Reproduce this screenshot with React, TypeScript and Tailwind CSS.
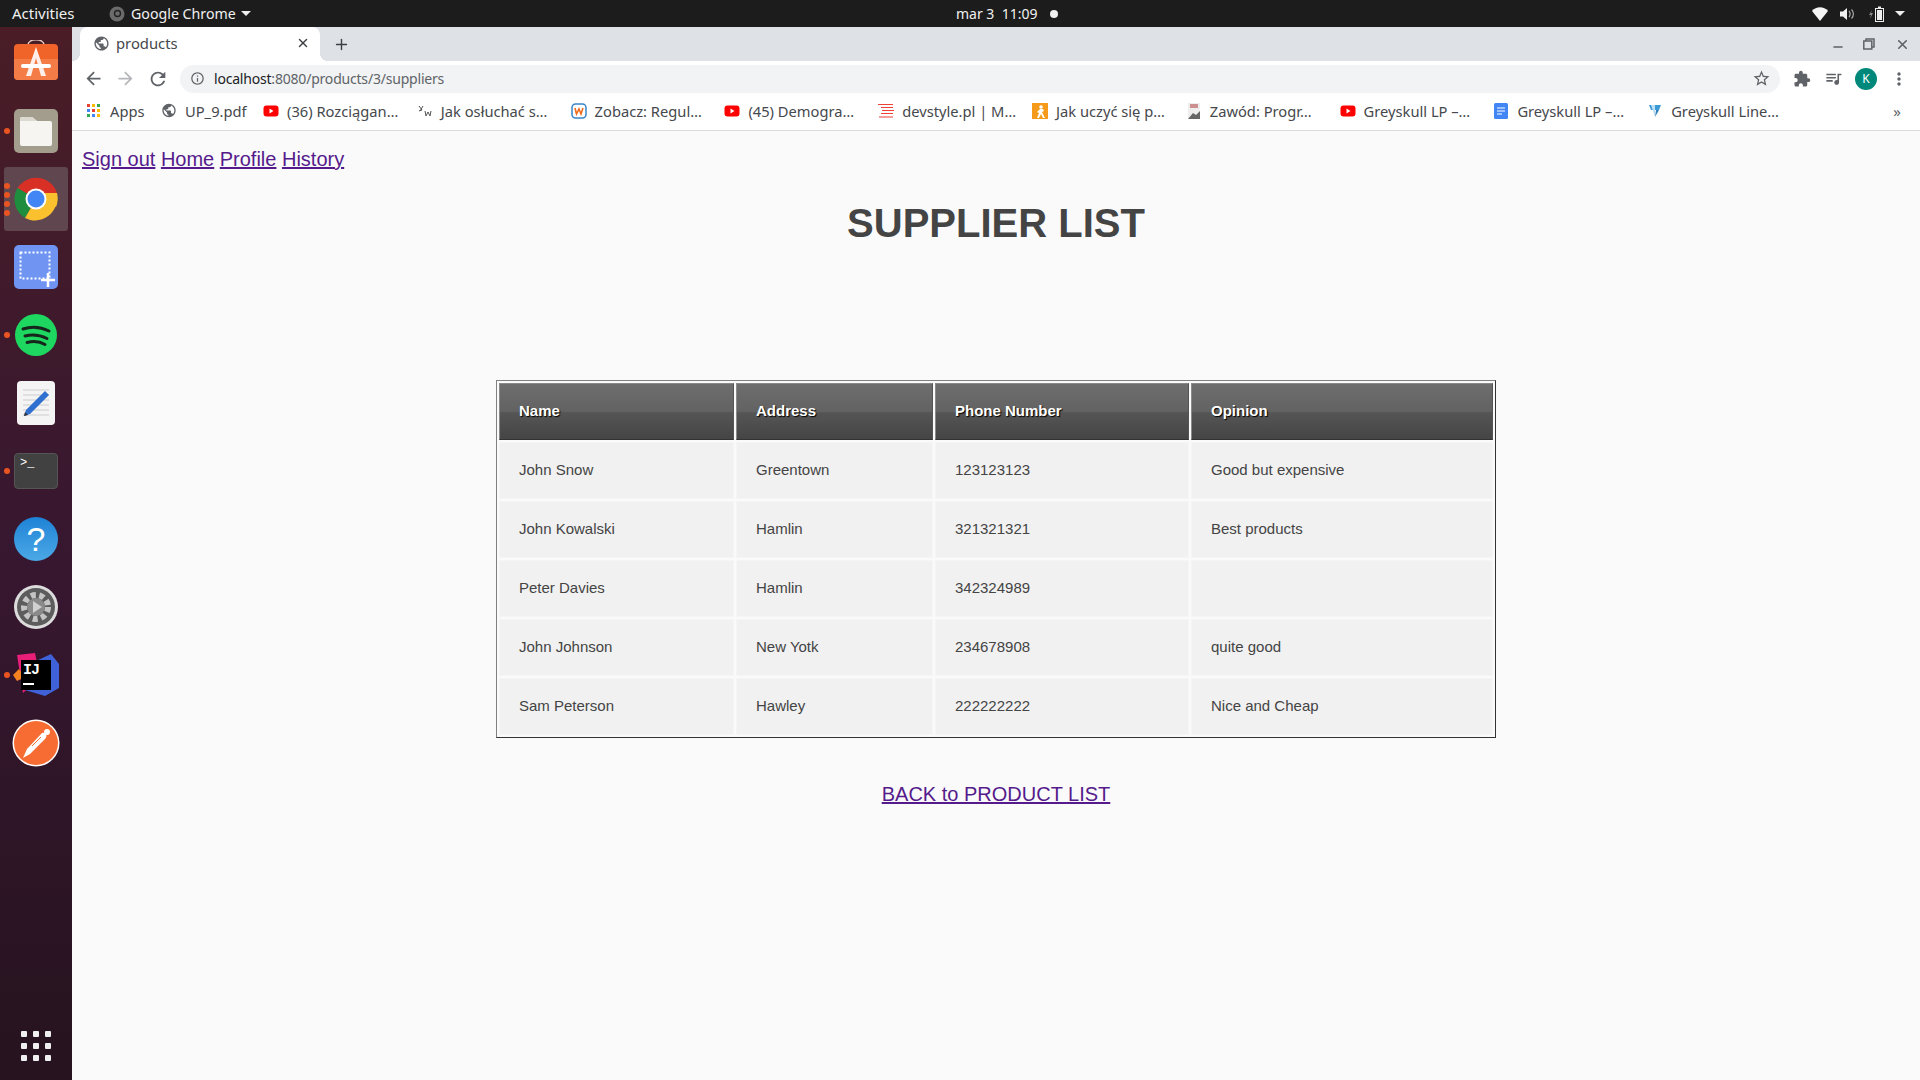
import { MdArrowBack, MdArrowForward, MdExtension, MdInfoOutline, MdMoreVert, MdPublic, MdQueueMusic, MdRefresh, MdStarBorder } from "react-icons/md";
import { Minus, Plus, X } from "lucide-react";

const suppliers = [
  { name: "John Snow", address: "Greentown", phone: "123123123", opinion: "Good but expensive" },
  { name: "John Kowalski", address: "Hamlin", phone: "321321321", opinion: "Best products" },
  { name: "Peter Davies", address: "Hamlin", phone: "342324989", opinion: "" },
  { name: "John Johnson", address: "New Yotk", phone: "234678908", opinion: "quite good" },
  { name: "Sam Peterson", address: "Hawley", phone: "222222222", opinion: "Nice and Cheap" },
];

function YouTubeIcon() {
  return (
    <svg width="16" height="16" viewBox="0 0 16 16">
      <rect x="0.5" y="2.5" width="15" height="11" rx="3" fill="#f00" />
      <path d="M6.5 5.5v5l4-2.5z" fill="#fff" />
    </svg>
  );
}

function AppsIcon() {
  const colors = ["#ea4335", "#fbbc05", "#34a853", "#4285f4", "#ea4335", "#fbbc05", "#34a853", "#4285f4", "#fbbc05"];
  return (
    <div className="grid grid-cols-3 gap-[2px] w-[13px]">
      {colors.map((c, i) => (
        <svg key={i} width="3" height="3" className="block"><rect width="3" height="3" fill={c} /></svg>
      ))}
    </div>
  );
}

const bookmarks: { label: string; icon: React.ReactNode }[] = [
  { label: "UP_9.pdf", icon: <MdPublic size={17} className="text-[#5f6368]" /> },
  { label: "(36) Rozciągan…", icon: <YouTubeIcon /> },
  {
    label: "Jak osłuchać s…",
    icon: (
      <svg width="16" height="16" viewBox="0 0 16 16" stroke="#555" strokeWidth="1" fill="none">
        <path d="M2 3l3 4-3 1M6 3L3 8M8 8l1 5 2-4 2 4 1-5" />
      </svg>
    ),
  },
  {
    label: "Zobacz: Regul…",
    icon: (
      <svg width="16" height="16" viewBox="0 0 16 16">
        <rect x="1" y="1" width="14" height="14" rx="3.5" fill="#fff" stroke="#3a86c8" strokeWidth="1.5" />
        <path d="M4 5l1.5 6L8 6l2 5 2-6" fill="none" stroke="#f26b1d" strokeWidth="1.6" />
      </svg>
    ),
  },
  { label: "(45) Demogra…", icon: <YouTubeIcon /> },
  {
    label: "devstyle.pl | M…",
    icon: (
      <svg width="16" height="16" viewBox="0 0 16 16" stroke="#ef4136" strokeWidth="1.2">
        <path d="M0 1.5h15M3 4.5h12M4 7.5h12M3 10.5h12M1 14h14" />
      </svg>
    ),
  },
  {
    label: "Jak uczyć się p…",
    icon: (
      <svg width="16" height="16" viewBox="0 0 16 16">
        <rect width="16" height="16" fill="#f59a1b" />
        <circle cx="9" cy="4" r="1.8" fill="#fff" />
        <path d="M8 6l-3 3 2 1-2 5h2l2-4 2 4h2l-3-6 2-1-1-2z" fill="#fff" />
      </svg>
    ),
  },
  {
    label: "Zawód: Progr…",
    icon: (
      <svg width="16" height="16" viewBox="0 0 16 16">
        <rect x="2" y="0" width="12" height="16" fill="#eee" />
        <path d="M4 2h8M4 4h8" stroke="#a33" strokeWidth="1" />
        <path d="M2 16l5-6 3 2 4-4v8z" fill="#666" />
      </svg>
    ),
  },
  { label: "Greyskull LP –…", icon: <YouTubeIcon /> },
  {
    label: "Greyskull LP –…",
    icon: (
      <svg width="16" height="16" viewBox="0 0 16 16">
        <rect x="1" width="14" height="16" rx="1.5" fill="#4285f4" />
        <path d="M4 5h8M4 8h8M4 11h5" stroke="#fff" strokeWidth="1.2" />
      </svg>
    ),
  },
  {
    label: "Greyskull Line…",
    icon: (
      <svg width="16" height="16" viewBox="0 0 16 16">
        <path d="M2 2h12l-2 5H4z" fill="#3c9ad6" />
        <path d="M4 2h4v12z" fill="#bfe0f4" />
        <path d="M8 14l4-7h-3z" fill="#2f7fb8" />
      </svg>
    ),
  },
];

function TopBar() {
  return (
    <div className="h-[27px] bg-[#1c1c1c] text-[#f0f0f0] text-[15px] flex items-center relative shrink-0">
      <span className="ml-3 w-[97px]">Activities</span>
      <svg width="16" height="16" viewBox="0 0 16 16">
        <circle cx="8" cy="8" r="7.5" fill="#6b6b6b" />
        <circle cx="8.5" cy="7.5" r="3" fill="none" stroke="#222" strokeWidth="1.4" />
      </svg>
      <span className="ml-[6px] text-[14.2px]">Google Chrome</span>
      <svg width="10" height="5" viewBox="0 0 10 5" className="ml-[5px]"><path d="M0 0h10L5 5z" fill="#eee" /></svg>
      <div className="absolute left-[956px] top-0 h-full flex items-center gap-[13px] text-[14px]">
        <span>mar 3&nbsp; 11:09</span>
        <span className="w-[8px] h-[8px] rounded-full bg-[#f0f0f0]" />
      </div>
      <div className="ml-auto flex items-center">
        <svg width="16" height="14" viewBox="0 0 16 14" className="mr-[12px]">
          <path d="M0 4C4-1 12-1 16 4L8 14z" fill="#f5f5f5" />
        </svg>
        <svg width="15" height="14" viewBox="0 0 15 14" className="mr-[14px]">
          <path d="M0 4.5h3L7 1v12L3 9.5H0z" fill="#f0f0f0" />
          <path d="M9 4c1.5 1.5 1.5 4.5 0 6M11.5 2.5c2.5 2.5 2.5 6.5 0 9" fill="none" stroke="#aaa" strokeWidth="1.2" />
        </svg>
        <svg width="16" height="16" viewBox="0 0 16 16" className="mr-[10px]">
          <path d="M3 4L0 9h2l-1 4 3-6H2z" fill="#888" />
          <rect x="6.5" y="2.5" width="8" height="13" fill="none" stroke="#eee" />
          <rect x="9" y="0.5" width="3" height="2" fill="#eee" />
          <rect x="8" y="4" width="5" height="10" fill="#eee" />
        </svg>
        <svg width="10" height="5" viewBox="0 0 10 5" className="mr-[15px]"><path d="M0 0h10L5 5z" fill="#eee" /></svg>
      </div>
    </div>
  );
}

function DockSlot({ children, dots = 0, active = false }: { children: React.ReactNode; dots?: number; active?: boolean }) {
  return (
    <div className="h-[68px] flex items-center justify-center relative">
      {active && <div className="absolute left-1 right-1 top-[2px] bottom-[2px] rounded-[3px] bg-[#5f464f]" />}
      <div className="absolute left-[4px] top-0 bottom-0 flex flex-col justify-center gap-[3px]">
        {Array.from({ length: dots }).map((_, i) => (
          <span key={i} className="block w-[6px] h-[6px] rounded-full bg-[#e95420]" />
        ))}
      </div>
      <div className="relative w-[48px] h-[48px] flex items-center justify-center">{children}</div>
    </div>
  );
}

function Dock() {
  return (
    <div className="w-[72px] shrink-0 pt-[2px] flex flex-col bg-gradient-to-b from-[#4a1d26] via-[#371730] to-[#26131f]">
      <DockSlot>
        <svg width="46" height="46" viewBox="0 0 46 46">
          <path d="M15 5c0-7 16-7 16 0" fill="none" stroke="#e8d5c5" strokeWidth="1.5" />
          <rect x="1" y="4" width="44" height="36" rx="4" fill="#f0642a" />
          <path d="M1 19h44v17a4 4 0 0 1-4 4H5a4 4 0 0 1-4-4z" fill="#f47d47" />
          <path d="M23 7l-10 29h5l5-18 5 18h5z" fill="#fdf0ea" />
          <rect x="8" y="24" width="30" height="4" rx="2" fill="#fff" />
        </svg>
      </DockSlot>
      <DockSlot dots={1}>
        <svg width="46" height="46" viewBox="0 0 46 46">
          <rect x="1" y="1" width="44" height="44" rx="5" fill="#a29d8d" />
          <path d="M7 11a2 2 0 0 1 2-2h10l5 4h13a2 2 0 0 1 2 2v21a2 2 0 0 1-2 2H9a2 2 0 0 1-2-2z" fill="#f6f5f2" />
          <path d="M7 11a2 2 0 0 1 2-2h10l5 4H7z" fill="#dcd9d0" />
        </svg>
      </DockSlot>
      <DockSlot dots={4} active>
        <svg width="46" height="46" viewBox="0 0 46 46">
          <path d="M23 23L4.5 12A22 22 0 0 1 44 17H23z" fill="#d93025" />
          <path d="M23 23L12 42A22 22 0 0 1 4.5 12z" fill="#1e8e3e" />
          <path d="M23 23h21A22 22 0 0 1 12 42z" fill="#fbc02d" />
          <path d="M23 17h21a22 22 0 0 1-1 14z" fill="#fbc02d" />
          <circle cx="23" cy="23" r="10.5" fill="#fff" />
          <circle cx="23" cy="23" r="8.5" fill="#4285f4" />
        </svg>
      </DockSlot>
      <DockSlot>
        <svg width="46" height="46" viewBox="0 0 46 46">
          <rect x="1" y="1" width="44" height="44" rx="5" fill="#6f94f2" />
          <rect x="7.5" y="8.5" width="29" height="26" fill="none" stroke="#fff" strokeWidth="2" strokeDasharray="2 2" />
          <path d="M28 36h14M35 29v14" stroke="#fff" strokeWidth="2.5" />
        </svg>
      </DockSlot>
      <DockSlot dots={1}>
        <svg width="44" height="44" viewBox="0 0 44 44">
          <circle cx="22" cy="22" r="21" fill="#1ed760" />
          <path d="M9 16c9-3 18-2 26 2M11 23c8-2 15-1 22 2.5M13 29.5c6-1.5 13-1 18 2" fill="none" stroke="#17261c" strokeWidth="3" strokeLinecap="round" />
        </svg>
      </DockSlot>
      <DockSlot>
        <svg width="38" height="44" viewBox="0 0 38 44">
          <rect width="38" height="44" rx="4" fill="#f4f4f4" />
          <path d="M6 9h26M6 14h26M6 19h26M6 24h26M6 29h26M6 34h26" stroke="#ccc" />
          <path d="M28 10l4 4-19 19-6 2 2-6z" fill="#2f6fd0" />
          <path d="M7 35l1-4 3 3z" fill="#333" />
        </svg>
      </DockSlot>
      <DockSlot dots={1}>
        <div className="w-[44px] h-[36px] rounded-[4px] bg-[#414141] border border-[#555] text-white font-['Liberation_Mono',monospace] text-[12px] leading-none pl-[5px] pt-[3px]">
          &gt;_
        </div>
      </DockSlot>
      <DockSlot>
        <div className="w-[44px] h-[44px] rounded-full bg-gradient-to-b from-[#1d82d6] to-[#4ba9e6] text-white text-[34px] leading-[44px] text-center font-['Liberation_Sans',sans-serif]">
          ?
        </div>
      </DockSlot>
      <DockSlot>
        <svg width="46" height="46" viewBox="0 0 46 46">
          <circle cx="23" cy="23" r="22" fill="#dcdcdc" />
          <circle cx="23" cy="23" r="19" fill="#5c5c5c" />
          <circle cx="23" cy="23" r="12" fill="none" stroke="#c4c4c4" strokeWidth="6" strokeDasharray="5 3.5" />
          <circle cx="23" cy="23" r="9" fill="#8a8a8a" />
          <path d="M20 17l9 6-9 6z" fill="#d0d0d0" />
        </svg>
      </DockSlot>
      <DockSlot dots={1}>
        <svg width="48" height="48" viewBox="0 0 48 48" className="absolute left-0 top-0">
          <path d="M5 4l18-2 5 24-17 16z" fill="#e91e78" />
          <path d="M24 10l15-7 8 10v24l-14 8-20-6z" fill="#3f62d8" />
          <path d="M1 24l6-6 6 8-8 4z" fill="#f58220" />
        </svg>
        <div className="relative w-[30px] h-[30px] bg-black text-white font-['Liberation_Mono',monospace] font-bold text-[15px] leading-[22px] pl-[2px] tracking-[-1px]">
          IJ
          <div className="w-[11px] h-[2px] bg-white mt-[1px]" />
        </div>
      </DockSlot>
      <DockSlot>
        <svg width="48" height="48" viewBox="0 0 48 48">
          <circle cx="24" cy="24" r="23.5" fill="#fff" />
          <circle cx="24" cy="24" r="22" fill="#f76c32" />
          <path d="M11 39l7-4 15-15c3-3 1-7-3-6L15 30z" fill="#fff" />
          <circle cx="35" cy="13" r="3" fill="#fff" />
          <path d="M20 27l9-9" stroke="#f76c32" strokeWidth="1" />
        </svg>
      </DockSlot>
      <div className="mt-auto mb-[19px] ml-[21px] grid grid-cols-3 gap-[6px] w-[30px]">
        {Array.from({ length: 9 }).map((_, i) => (
          <span key={i} className="w-[6px] h-[6px] rounded-[1px] bg-[#f0f0f0]" />
        ))}
      </div>
    </div>
  );
}

function BrowserChrome() {
  return (
    <div className="shrink-0 font-['Noto_Sans',sans-serif]">
      <div className="h-[34px] bg-[#dee1e6] flex items-stretch pl-2 relative">
        <div className="w-[240px] bg-white rounded-t-[8px] flex items-center pb-[2px] pl-[13px] pr-[10px] relative">
          <MdPublic size={17} className="text-[#5f6368]" />
          <span className="ml-[6px] text-[14.8px] text-[#45484c]">products</span>
          <X size={14} strokeWidth={2.5} className="ml-auto text-[#3c4043]" />
          <span className="absolute left-[-8px] bottom-0 w-2 h-2 bg-[radial-gradient(circle_at_0_0,#dee1e6_8px,#fff_8px)]" />
          <span className="absolute right-[-8px] bottom-0 w-2 h-2 bg-[radial-gradient(circle_at_100%_0,#dee1e6_8px,#fff_8px)]" />
        </div>
        <Plus size={17} strokeWidth={2} className="ml-[13px] self-center text-[#3c4043]" />
        <div className="ml-auto flex items-center text-[#5f6368] mr-[10px] gap-[17px]">
          <Minus size={14} strokeWidth={2.5} className="mt-[5px]" />
          <svg width="12" height="12" viewBox="0 0 12 12" fill="none" stroke="#5f6368" strokeWidth="1.5" className="ml-[1.5px] mr-[3px]">
            <rect x="0.8" y="3" width="8" height="8" fill="#dee1e6" />
            <path d="M3 3V1h8v8H9" />
          </svg>
          <X size={15} strokeWidth={2.5} />
        </div>
      </div>
      <div className="h-[36px] pb-[1px] bg-white flex items-center pl-[11px]">
        <MdArrowBack size={21} className="text-[#5f6368]" />
        <MdArrowForward size={21} className="text-[#b5b7ba] ml-[11px]" />
        <MdRefresh size={22} className="text-[#5f6368] ml-[11px]" />
        <div className="ml-[11px] w-[1600px] h-[28px] rounded-full bg-[#f1f3f4] flex items-center pl-[10px] pr-[9px]">
          <MdInfoOutline size={15} className="text-[#5f6368]" />
          <span className="ml-[9px] text-[14px] tracking-[-0.2px] text-[#5f6368]">
            <span className="text-[#202124]">localhost</span>:8080/products/3/suppliers
          </span>
          <MdStarBorder size={19} className="ml-auto text-[#5f6368]" />
        </div>
        <MdExtension size={18} className="ml-[13px] text-[#5f6368]" />
        <MdQueueMusic size={19} className="ml-[13px] text-[#5f6368]" />
        <div className="ml-[12px] w-[22px] h-[22px] rounded-full bg-[#00897b] text-white text-[12px] leading-[22px] text-center">K</div>
        <MdMoreVert size={20} className="ml-[12px] text-[#5f6368]" />
      </div>
      <div className="h-[34px] pb-[5px] bg-white border-b border-[#dadce0] flex items-center pl-[15px] text-[14.7px] text-[#45484c]">
        <div className="w-[74px] flex items-center gap-[10px]">
          <AppsIcon />
          <span>Apps</span>
        </div>
        {bookmarks.map((b, i) => (
          <div key={i} className={i === 0 ? "w-[102px] flex items-center gap-[8px] whitespace-nowrap" : "w-[153.8px] flex items-center gap-[8px] whitespace-nowrap"}>
            <span className="shrink-0 w-[16px] flex justify-center">{b.icon}</span>
            <span>{b.label}</span>
          </div>
        ))}
        <span className="ml-auto mr-[19px] text-[#5f6368] text-[15px] leading-none">»</span>
      </div>
    </div>
  );
}

export default function App() {
  return (
    <div className="w-[1920px] h-[1080px] overflow-hidden flex flex-col font-['Noto_Sans',sans-serif]">
      <TopBar />
      <div className="flex flex-1 min-h-0">
        <Dock />
        <div className="flex-1 flex flex-col min-w-0">
          <BrowserChrome />
          <div className="flex-1 bg-[#fafafa] font-['Liberation_Sans',sans-serif] text-[#444]">
            <div className="pl-[10px] pt-[17px] text-[20px] leading-[23px] flex gap-[5.5px]">
              {["Sign out", "Home", "Profile", "History"].map((l) => (
                <a key={l} href="#" className="text-[#551a8b] underline">{l}</a>
              ))}
            </div>
            <h1 className="mt-[29px] text-center text-[40px] leading-[46px] font-bold text-[#444]">SUPPLIER LIST</h1>
            <div className="mt-[134px] flex justify-center">
              <table className="w-[1000px] table-fixed border-separate border-spacing-[2px] border border-t-[#808080] border-l-[#808080] border-r-[#333] border-b-[#333] text-[15px]">
                <colgroup>
                  <col className="w-[235px]" />
                  <col className="w-[197px]" />
                  <col className="w-[254px]" />
                  <col />
                </colgroup>
                <thead>
                  <tr>
                    {["Name", "Address", "Phone Number", "Opinion"].map((h) => (
                      <th
                        key={h}
                        className="h-[57px] pl-[19px] text-left font-bold text-white [text-shadow:1px_1px_1px_#000] border border-[#8a8a8a] border-b-[#333] border-r-[#555] bg-[linear-gradient(#6e6e6e,#626262_50%,#555555_52%,#454545)]"
                      >
                        {h}
                      </th>
                    ))}
                  </tr>
                </thead>
                <tbody>
                  {suppliers.map((s) => (
                    <tr key={s.name}>
                      {[s.name, s.address, s.phone, s.opinion].map((v, i) => (
                        <td key={i} className="h-[57px] pl-[19px] bg-[#f1f1f1] border border-[#f5f5f5]">
                          {v}
                        </td>
                      ))}
                    </tr>
                  ))}
                </tbody>
              </table>
            </div>
            <div className="mt-[45px] text-center text-[20px] leading-[23px]">
              <a href="#" className="text-[#551a8b] underline">BACK to PRODUCT LIST</a>
            </div>
          </div>
        </div>
      </div>
    </div>
  );
}
